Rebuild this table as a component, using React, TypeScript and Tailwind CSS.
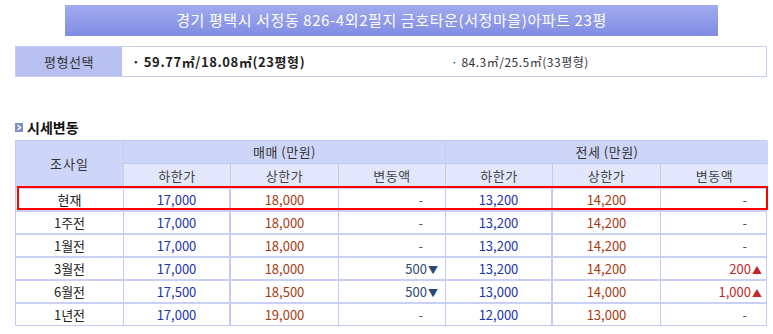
import React from "react";

const font = { fontFamily: '"Noto Sans CJK KR", "Noto Sans", sans-serif' };

type Row = {
  label: string;
  a: string;
  b: string;
  c: string;
  cDir?: "down" | "up";
  d: string;
  e: string;
  f: string;
  fDir?: "down" | "up";
};

const rows: Row[] = [
  { label: "현재", a: "17,000", b: "18,000", c: "-", d: "13,200", e: "14,200", f: "-" },
  { label: "1주전", a: "17,000", b: "18,000", c: "-", d: "13,200", e: "14,200", f: "-" },
  { label: "1월전", a: "17,000", b: "18,000", c: "-", d: "13,200", e: "14,200", f: "-" },
  { label: "3월전", a: "17,000", b: "18,000", c: "500", cDir: "down", d: "13,200", e: "14,200", f: "200", fDir: "up" },
  { label: "6월전", a: "17,500", b: "18,500", c: "500", cDir: "down", d: "13,000", e: "14,000", f: "1,000", fDir: "up" },
  { label: "1년전", a: "17,000", b: "19,000", c: "-", d: "12,000", e: "13,000", f: "-" },
];

function Change({ v, dir }: { v: string; dir?: "down" | "up" }) {
  if (!dir) {
    return <span className="text-[#555] mr-[15px]">-</span>;
  }
  if (dir === "down") {
    return (
      <span className="text-[#2d4a6e]">
        {v}
        <span className="text-[10px] ml-[1px]">▼</span>
      </span>
    );
  }
  return (
    <span className="text-[#c02828]">
      {v}
      <span className="text-[10px] ml-[1px]">▲</span>
    </span>
  );
}

const cols = "grid grid-cols-[108px_107px_108px_107px_107px_108px_107px]";

export default function App() {
  return (
    <div className="w-[773px] h-[334px] bg-white relative overflow-hidden text-[12px] text-[#222]" style={font}>
      {/* Title bar */}
      <div className="ml-[65px] mt-[5px] w-[653px] h-[31px] bg-gradient-to-b from-[#a3abee] to-[#7f8ce3] flex items-center justify-center text-white text-[15px] tracking-[0.6px]">
        경기 평택시 서정동 826-4외2필지 금호타운(서정마을)아파트 23평
      </div>

      {/* Pyeong select */}
      <div className="ml-[15px] mt-[10px] w-[752px] h-[31px] border border-[#c6cdf4] flex">
        <div className="w-[106px] bg-[#b7c0f0] flex items-center justify-center text-[#333] text-[13px] tracking-[0.5px]">
          평형선택
        </div>
        <div className="flex-1 flex items-center">
          <div className="w-[329px] pl-[10px] font-bold text-[13px] text-[#222] tracking-[0.6px]">· 59.77㎡/18.08㎡(23평형)</div>
          <div className="text-[12px] text-[#333] tracking-[0.5px]">· 84.3㎡/25.5㎡(33평형)</div>
        </div>
      </div>

      {/* Section heading */}
      <div className="ml-[15px] mt-[42px] flex items-center gap-[4px] h-[16px]">
        <div className="w-[8px] h-[9px] bg-[#7c8fc4] flex items-center justify-center">
          <svg width="6" height="7" viewBox="0 0 6 7">
            <path d="M1.5 1 L4.5 3.5 L1.5 6" stroke="white" strokeWidth="1.4" fill="none" />
          </svg>
        </div>
        <span className="font-bold text-[14px] text-[#111]">시세변동</span>
      </div>

      {/* Table */}
      <div className="relative ml-[15px] mt-[5px] w-[752px] border-l border-r border-b border-[#c3cbf2]">
        <div className={`${cols} border-t border-[#c3cbf2]`}>
          <div className="row-span-2 bg-[#cdd5f9] flex items-center justify-center text-[13px] text-[#333] border-r border-[#c3cbf2] tracking-[1px]">
            조사일
          </div>
          <div className="col-span-3 h-[23px] bg-[#cdd5f9] flex items-center justify-center text-[13px] text-[#333] border-r border-b border-[#c3cbf2] tracking-[0.5px]">
            매매 (만원)
          </div>
          <div className="col-span-3 h-[23px] bg-[#cdd5f9] flex items-center justify-center text-[13px] text-[#333] border-b border-[#c3cbf2] tracking-[0.5px]">
            전세 (만원)
          </div>
          {["하한가", "상한가", "변동액", "하한가", "상한가", "변동액"].map((h, i) => (
            <div
              key={i}
              className={`h-[23px] bg-[#e2e7fc] flex items-center justify-center text-[13px] text-[#444] tracking-[0.5px] ${i < 5 ? "border-r border-[#c3cbf2]" : ""}`}
            >
              {h}
            </div>
          ))}
        </div>
        {rows.map((r, i) => (
          <div key={i} className={`${cols} h-[23px] border-t-2 border-[#c9d0f4]`}>
            <div className="flex items-center justify-center text-[13px] text-[#222] border-r border-[#c3cbf2]">{r.label}</div>
            <div className="flex items-center justify-center text-[13px] text-[#2233aa] border-r-2 border-[#c3cbf2]">{r.a}</div>
            <div className="flex items-center justify-center text-[13px] text-[#a83a10] border-r border-[#c3cbf2]">{r.b}</div>
            <div className="flex items-center justify-end pr-[7px] text-[13px] border-r border-[#c3cbf2]">
              <Change v={r.c} dir={r.cDir} />
            </div>
            <div className="flex items-center justify-center text-[13px] text-[#2233aa] border-r-2 border-[#c3cbf2]">{r.d}</div>
            <div className="flex items-center justify-center text-[13px] text-[#a83a10] border-r border-[#c3cbf2]">{r.e}</div>
            <div className="flex items-center justify-end pr-[6px] text-[13px]">
              <Change v={r.f} dir={r.fDir} />
            </div>
          </div>
        ))}
        {/* highlight current row */}
        <div className="absolute left-[1px] top-[46px] w-[751px] h-[24px] border-2 border-[#ff0000] pointer-events-none" />
      </div>
    </div>
  );
}
